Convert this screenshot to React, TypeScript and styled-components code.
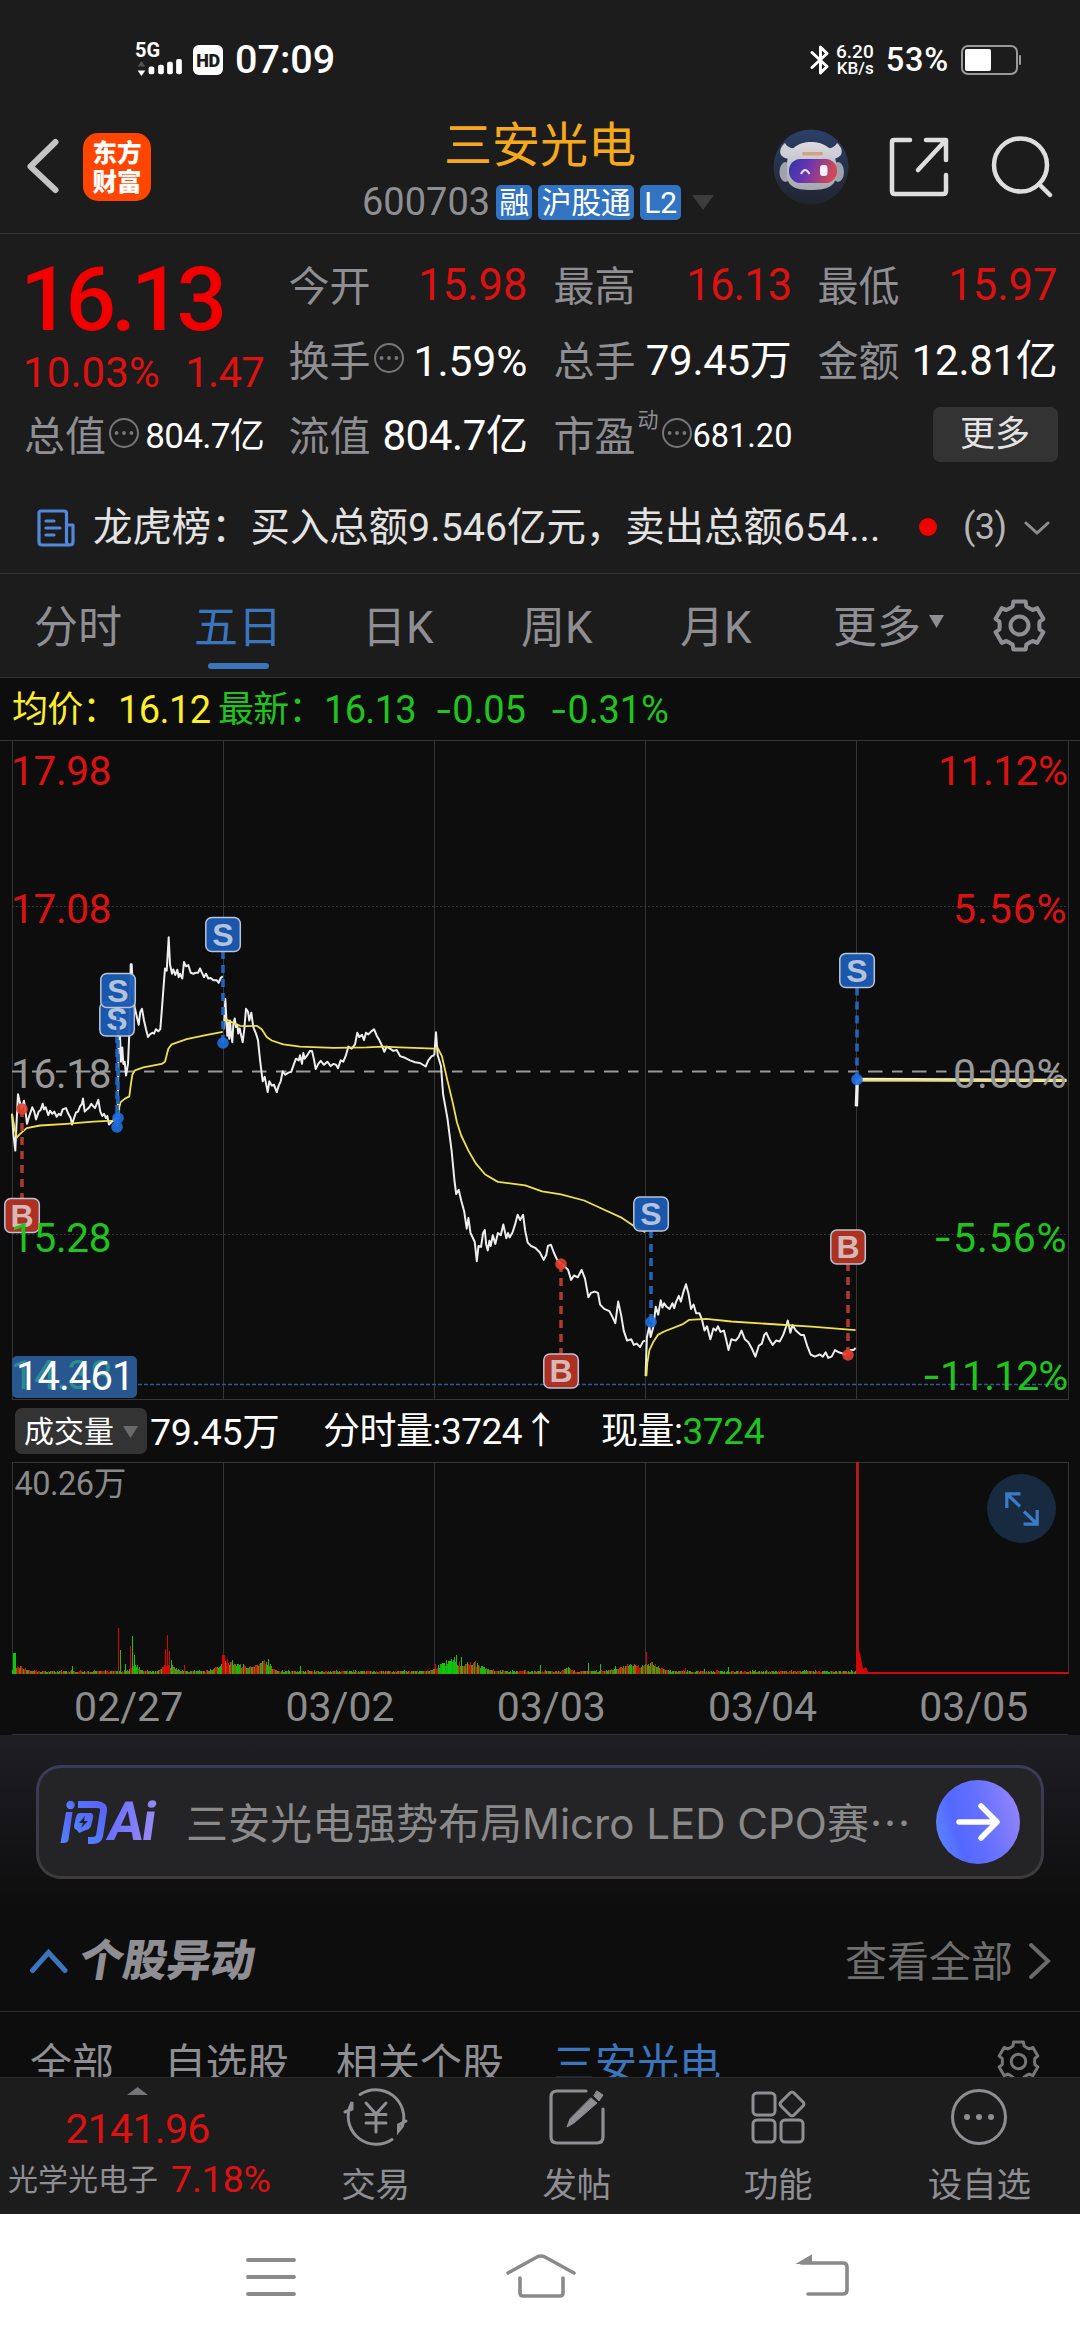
import React from "react";
import styled, { createGlobalStyle } from "styled-components";

const GlobalStyle = createGlobalStyle`
  * { box-sizing: border-box; }
  body { margin: 0; background: #0d0d0d; }
`;

const RED = "#dc1212";
const GREEN = "#1fc41f";
const BLUE = "#3a75bd";
const GREY = "#8e8e93";

const Screen = styled.div`
  width: 1080px;
  height: 2340px;
  overflow: hidden;
  display: flex;
  flex-direction: column;
  background: #0d0d0d;
  color: #fff;
  font-family: Roboto, "Noto Sans CJK SC", sans-serif;
  white-space: nowrap;
`;

const Text = styled.span<{ $size: number; $color?: string; $ls?: number; $weight?: number; $w?: number; $ml?: number }>`
  flex: none;
  font-size: ${(p) => p.$size}px;
  line-height: 1.2;
  font-weight: ${(p) => p.$weight ?? 400};
  color: ${(p) => p.$color ?? "#fff"};
  letter-spacing: ${(p) => p.$ls ?? 0}px;
  margin-left: ${(p) => p.$ml ?? 0}px;
  ${(p) => (p.$w ? `width: ${p.$w}px;` : "")}
`;
const Minus = styled.span`
  font-family: Inter, sans-serif;
  line-height: 1;
`;

/* ---------- status bar ---------- */

const StatusBar = styled.div`
  height: 104px;
  padding: 16px 58px 0 136px;
  display: flex;
  align-items: center;
  background: #1c1c1c;
`;
const Signal = styled.div`
  width: 57px;
  height: 36px;
  display: flex;
  flex-direction: column;
`;
const SignalLabel = styled.span`
  font: 700 20px/17px Roboto, sans-serif;
  margin-left: -1px;
`;
const HdBadge = styled.span`
  width: 30px;
  height: 30px;
  margin-right: 12px;
  border-radius: 6px;
  background: #fff;
  color: #1c1c1c;
  font: 900 18px/31px Roboto, sans-serif;
  letter-spacing: -0.5px;
  text-align: center;
`;
const Speed = styled.div`
  width: 42px;
  margin: 0 8px 0 6px;
  display: flex;
  flex-direction: column;
  align-items: flex-end;
  font: 500 19px/17px Roboto, sans-serif;
  padding-right: 4px;
`;
const SpeedUnit = styled.span`
  font-size: 17px;
  line-height: 17px;
`;
const Spacer = styled.div`
  flex: 1;
`;

/* ---------- title bar ---------- */

const TitleBar = styled.header`
  height: 130px;
  padding: 0 27px 0 26px;
  display: flex;
  align-items: center;
  background: #1c1c1c;
  border-bottom: 1px solid #343434;
`;
const AppLogo = styled.div`
  width: 68px;
  height: 68px;
  margin: -4px 0 0 24px;
  border-radius: 15px;
  background: #ff4500;
  font: 900 24.5px/29px "Noto Sans CJK SC", sans-serif;
  text-align: center;
  padding-top: 4px;
  display: flex;
  flex-direction: column;
`;
const TitleBlock = styled.div`
  width: 360px;
  margin-left: 209px;
  margin-right: 1px;
  display: flex;
  flex-direction: column;
  align-items: center;
`;
const CodeRow = styled.div`
  width: 360px;
  height: 36px;
  margin-top: 10px;
  padding-left: 2px;
  display: flex;
  align-items: center;
  gap: 6px;
`;
const Tag = styled.span<{ $w: number }>`
  width: ${(p) => p.$w}px;
  height: 35px;
  border-radius: 5px;
  background: #3274c3;
  font-size: 30px;
  line-height: 35px;
  text-align: center;
  letter-spacing: -0.3px;
`;
const Actions = styled.div`
  margin: -4px 0 0 auto;
  display: flex;
  align-items: center;
`;

/* ---------- quote ---------- */

const Quote = styled.section`
  height: 237px;
  padding: 0 22px 0 24px;
  display: flex;
  background: #1c1c1c;
`;
const PriceColumn = styled.div`
  width: 240px;
  margin-right: 24.5px;
  display: flex;
  flex-direction: column;
`;
const BigPrice = styled.div`
  height: 102px;
  margin-left: -4px;
  padding-top: 15px;
  font-size: 89px;
  line-height: 102px;
  font-weight: 500;
  color: #f20000;
  letter-spacing: -5px;
`;
const ChangeRow = styled.div`
  height: 75px;
  display: flex;
  align-items: center;
  justify-content: space-between;
`;
const StatGrid = styled.div`
  padding-top: 15px;
  display: grid;
  grid-template-columns: 239px 238px 240px;
  grid-auto-rows: 75px;
  column-gap: 26px;
`;
const Stat = styled.div<{ $h?: number }>`
  height: ${(p) => p.$h ?? 75}px;
  display: flex;
  align-items: center;
  justify-content: space-between;
`;
const StatLabel = styled.span`
  display: flex;
  align-items: center;
  color: ${GREY};
  font-size: 41px;
  line-height: 50px;
`;
const Dynamic = styled.sup`
  font-size: 21px;
  line-height: 24px;
  align-self: flex-start;
  margin: -4px 0 0 2px;
`;
const MoreButton = styled.button`
  width: 125px;
  height: 55px;
  margin: -4px 0 0 auto;
  border: 0;
  border-radius: 7px;
  background: #333;
  color: #e4e4e4;
  font: 400 35px/54px Roboto, "Noto Sans CJK SC", sans-serif;
  padding: 0;
`;
const News = styled.section`
  height: 103px;
  padding: 14px 30px 2px 37px;
  display: flex;
  align-items: center;
  background: #1c1c1c;
  border-bottom: 1px solid #343434;
`;
const Dot = styled.i`
  width: 18px;
  height: 18px;
  margin: -2px 0 0 12px;
  border-radius: 50%;
  background: #f20000;
`;

/* ---------- period tabs ---------- */

const Tabs = styled.nav`
  height: 104px;
  padding-left: 34px;
  display: flex;
  align-items: stretch;
  background: #1c1c1c;
  border-bottom: 1px solid #343434;
`;
const Tab = styled.div<{ $w: number; $on?: boolean }>`
  width: ${(p) => p.$w}px;
  padding-top: 26px;
  font-size: 44px;
  line-height: 56px;
  color: ${(p) => (p.$on ? BLUE : GREY)};
`;
const TabLine = styled.i`
  display: block;
  width: 61px;
  height: 6px;
  margin: 7px 0 0 14px;
  border-radius: 3px;
  background: ${BLUE};
`;
const GearSlot = styled.div`
  padding-top: 25px;
`;

/* ---------- charts ---------- */

const Summary = styled.div`
  height: 62px;
  padding: 3px 0 0 12px;
  display: flex;
  align-items: center;
`;
const PricePlot = styled.div`
  height: 660px;
  svg { display: block; }
`;
const VolumeHead = styled.div`
  height: 62px;
  padding-left: 15px;
  display: flex;
  align-items: center;
`;
const VolumeValues = styled.div`
  display: flex;
  align-items: center;
  padding: 3px 0 0 3px;
`;
const Picker = styled.div`
  width: 132px;
  height: 46px;
  border-radius: 7px;
  background: #333;
  display: flex;
  align-items: center;
  gap: 9px;
  padding: 2px 0 0 9px;
`;
const VolumePlot = styled.div`
  position: relative;
  height: 213px;
  svg { display: block; }
`;
const Expand = styled.div`
  position: absolute;
  right: 24px;
  top: 12px;
  width: 69px;
  height: 69px;
  border-radius: 50%;
  background: #182a40;
  display: flex;
  align-items: center;
  justify-content: center;
`;
const Dates = styled.div`
  height: 60px;
  margin: 0 12px;
  padding-left: 11px;
  border-bottom: 1px solid #343434;
  display: grid;
  grid-template-columns: repeat(5, 211.3px);
  font-size: 41px;
  line-height: 64px;
  text-align: center;
  color: #8c8c8c;
`;

/* ---------- assistant ---------- */

const Assistant = styled.section`
  height: 175px;
  padding: 30px 36px 0;
  background: linear-gradient(#1f1e24, #0d0d0d);
`;
const AskBorder = styled.div`
  height: 114px;
  padding: 3px;
  border-radius: 25px;
  background: linear-gradient(#3a3a5a, #3e3a3a);
`;
const AskBox = styled.div`
  height: 108px;
  border-radius: 22px;
  background: #242426;
  display: flex;
  align-items: center;
  padding-left: 20px;
`;
const AskLogo = styled.div`
  width: 127px;
  display: flex;
  align-items: center;
`;
const AskAi = styled.span`
  display: inline-block;
  padding: 0 4px;
  margin-left: -4px;
  font: 700 54px/60px Roboto, sans-serif;
  background: linear-gradient(90deg, #626cff, #9b8cf6);
  background-clip: text;
  -webkit-background-clip: text;
  color: transparent;
  transform: skewX(-8deg);
  letter-spacing: -2px;
`;
const AskText = styled.span`
  padding-top: 3px;
  font: 400 42px/52px Inter, "Noto Sans CJK SC", sans-serif;
  color: #8a8a8a;
`;
const Send = styled.div`
  width: 84px;
  height: 84px;
  margin-left: auto;
  margin-right: 21px;
  border-radius: 50%;
  background: linear-gradient(75deg, #5a84ff 8%, #5468ff 28%, #6470ff 55%, #9585fa 95%);
  display: flex;
  align-items: center;
  justify-content: center;
`;

/* ---------- movements ---------- */

const SectionHead = styled.div`
  height: 102px;
  padding: 0 29px 0 29px;
  display: flex;
  align-items: center;
  border-bottom: 1px solid #2a2a2a;
`;
const SectionTitle = styled.h2`
  margin: 0 auto 0 12px;
  font: 900 44px/60px "Noto Sans CJK SC", sans-serif;
  color: ${GREY};
  transform: skewX(-9deg);
  letter-spacing: -0.3px;
  padding-bottom: 8px;
`;
const ViewAll = styled.span`
  padding-top: 4px;
  font-size: 42px;
  line-height: 50px;
  color: #6e6e6e;
`;
const Filters = styled.div`
  height: 66px;
  padding: 28px 40px 0 30px;
  overflow: hidden;
  display: flex;
  align-items: flex-start;
  border-bottom: 1px solid #2a2a2a;
`;

/* ---------- bottom bar ---------- */

const BottomBar = styled.footer`
  height: 136px;
  display: flex;
  background: #1c1c1c;
`;
const IndexBox = styled.div`
  width: 275px;
  display: flex;
  flex-direction: column;
  align-items: center;
  padding-top: 9px;
  gap: 10px;
`;
const IndexRow = styled.div`
  width: 275px;
  margin-top: -7px;
  padding: 0 4px 0 8px;
  display: flex;
  align-items: center;
  justify-content: space-between;
`;
const Action = styled.div`
  width: 201.5px;
  padding-top: 7px;
  display: flex;
  flex-direction: column;
  align-items: center;
  gap: 16px;
`;
const SystemNav = styled.div`
  height: 126px;
  background: #fff;
  display: flex;
  padding-left: 241px;
`;
const NavSlot = styled.div<{ $w: number }>`
  width: ${(p) => p.$w}px;
  padding-top: 36px;
`;

/* ---------- icons ---------- */

const Icon = styled.svg<{ $ml?: string; $mt?: number }>`
  flex: none;
  margin-left: ${(p) => p.$ml ?? "0"};
  margin-top: ${(p) => p.$mt ?? 0}px;
`;

const More3 = () => (
  <Icon $ml="2px" $mt={-8} width="32" height="32" viewBox="0 0 32 32" fill="#77777a">
    <circle cx="16" cy="16" r="14" fill="none" stroke="#77777a" strokeWidth="2" />
    <circle cx="8.6" cy="16" r="1.9" /><circle cx="16" cy="16" r="1.9" /><circle cx="23.4" cy="16" r="1.9" />
  </Icon>
);

const Gear = ({ size, color, sw }: { size: number; color: string; sw: number }) => {
  const pts: string[] = [];
  for (let i = 0; i < 6; i++) {
    const a = (i * Math.PI) / 3;
    const add = (r: number, d: number) =>
      pts.push(`${(26 + r * Math.sin(a + d)).toFixed(1)},${(26 - r * Math.cos(a + d)).toFixed(1)}`);
    add(19.4, -0.52);
    add(20, -0.34);
    add(24.3, -0.25);
    add(24.3, 0.25);
    add(20, 0.34);
  }
  return (
    <svg width={size} height={size} viewBox="0 0 52 52" fill="none" stroke={color} strokeWidth={sw} strokeLinejoin="round">
      <polygon points={pts.join(" ")} />
      <circle cx="26" cy="26" r="8.8" />
    </svg>
  );
};

const Robot = () => (
  <svg width="76" height="76" viewBox="0 0 76 76">
    <defs>
      <linearGradient id="sky" x1="0" y1="0" x2="0" y2="1">
        <stop offset="0" stopColor="#2c3f68" /><stop offset="1" stopColor="#20242e" />
      </linearGradient>
      <linearGradient id="visor" x1="0" y1="0" x2="1" y2="0.2">
        <stop offset="0" stopColor="#2f36a8" /><stop offset="0.45" stopColor="#6a35b0" /><stop offset="1" stopColor="#cf4a55" />
      </linearGradient>
      <linearGradient id="shell" x1="0" y1="0" x2="0" y2="1">
        <stop offset="0" stopColor="#dcdce0" /><stop offset="1" stopColor="#a4a6b0" />
      </linearGradient>
    </defs>
    <circle cx="38" cy="38" r="37.5" fill="url(#sky)" />
    <path d="M12 14c-6 5-8 14 4 16l8-11c-6 1-10-1-12-5zM64 14c6 5 8 14-4 16l-8-11c6 1 10-1 12-5z" fill="#cdced6" />
    <ellipse cx="12.5" cy="43" rx="6" ry="10" fill="#a0a2ae" /><ellipse cx="65" cy="43" rx="6" ry="10" fill="#a0a2ae" />
    <path d="M14 34c1-14 11-21 24-21s24 7 25 21v13c-1 10-8 14-25 14s-23-4-24-14z" fill="url(#shell)" />
    <rect x="16" y="30" width="48" height="24" rx="11.5" fill="url(#visor)" />
    <rect x="29" y="23" width="21" height="3.500" rx="1.700" fill="#d6a27d" />
    <path d="M28 45q4-8 8.500 0" stroke="#e8e8ff" strokeWidth="2" fill="none" />
    <rect x="47" y="36" width="7.500" height="11" rx="3" fill="#f4f0ff" />
  </svg>
);

/* ---------- chart data ---------- */

type Frame = { x0: number; kx: number };
const FIRST: Frame = { x0: 0, kx: 1 / 3 };
const LAST: Frame = { x0: 420, kx: 1 / 2.376 };

const line = (f: Frame, raw: string) =>
  raw
    .split(" ")
    .map((p) => {
      const [x, y] = p.split(",").map(Number);
      return `${(f.x0 + x * f.kx).toFixed(1)},${(y / 2.306 - 10).toFixed(1)}`;
    })
    .join(" ");

const PRICE = [
  line(FIRST, "36,885 40,930 46,970 50,900 54,840 60,860 65,873 72,855 78,890 81,908 88,890 97,870 103,880 108,898 116,880 122,876 128,862 132,875 137,870 145,888 150,878 157,885 163,880 170,892 176,885 182,888 188,875 198,872 205,885 212,895 216,910 222,895 228,882 234,880 240,868 246,862 249,850 254,880 261,875 268,870 274,862 280,868 285,872 295,853 301,880 307,890 312,885 318,895 322,890 327,910 333,905 340,900 348,905 353,895 356,690 360,705 363,765 367,732 370,770 374,765 378,797 384,770 388,700 392,540 395,540 398,590 404,640 410,660 416,680 421,650 426,643 432,670 438,690 444,708 450,702 457,698 462,700 468,690 475,695 481,690 485,650 490,600 495,550 500,555 506,478 510,540 516,562 520,552 526,565 532,553 536,570 540,562 547,573 552,535 558,545 565,542 572,560 580,562 587,560 594,560 600,550 606,560 612,570 618,562 625,573 632,572 640,577 650,577 656,583 662,572 668,568"),
  line(FIRST, "672,690 676,620 680,680 682,705 684,675 688,712 690,670 693,700 697,720 700,680 704,665 708,685 712,680 715,700 719,688 722,700 728,720 733,690 738,643 744,650 748,670 754,652 760,685 768,700 774,715 780,760 788,810 794,800 798,815 803,835 808,810 815,820 822,818 830,835 836,820 842,810 848,787 856,795 865,790 874,788 882,770 888,758 896,762 900,750 906,770 910,745 914,758 922,750 930,740 936,740 942,760 947,782 955,770 962,763 972,772 982,765 992,775 1000,770 1008,772 1014,780 1022,762 1030,765 1038,750 1045,730 1055,735 1065,725 1072,698 1078,708 1086,703 1092,715 1098,698 1105,702 1114,695 1122,690 1130,705 1138,715 1146,728 1153,742 1160,730 1170,735 1180,740 1190,738 1200,752 1215,756 1230,762 1245,766 1260,768 1277,776 1285,762 1295,752 1303,750"),
  line(LAST, "34,750 38,697 42,750 50,775 55,840 60,868 65,895 75,970 82,1040 86,1070 92,1060 98,1085 105,1110 111,1150 115,1125 120,1160 130,1180 135,1225 139,1190 145,1192 150,1160 154,1153 157,1185 161,1200 165,1178 168,1190 173,1165 179,1185 185,1160 192,1165 198,1140 205,1172 209,1160 213,1170 220,1158 226,1140 232,1118 238,1130 245,1118 250,1155 256,1182 264,1190 275,1195 285,1205 294,1222 300,1210 304,1190 311,1187 318,1205 325,1220 335,1232 345,1238 352,1245 359,1268 366,1258 375,1262 384,1245 392,1265 400,1308 406,1298 415,1295 423,1298 428,1325 438,1335 450,1340 458,1355 464,1368 471,1318 478,1350 484,1385 492,1408 502,1405 508,1418 515,1415 523,1423 530,1410 535,1408"),
  line(LAST, "536,1490 539,1400 545,1375 548,1400 554,1378 560,1330 566,1348 572,1315 576,1332 580,1322 586,1330 593,1335 600,1322 604,1333 608,1320 615,1305 620,1318 626,1295 632,1278 638,1300 644,1335 650,1325 656,1345 664,1345 670,1360 676,1385 682,1375 690,1405 697,1380 703,1385 708,1375 714,1388 722,1385 728,1408 733,1430 740,1405 750,1408 757,1400 764,1385 772,1405 780,1412 788,1425 797,1445 805,1420 812,1415 818,1395 823,1390 830,1405 838,1418 846,1408 855,1410 863,1395 870,1375 874,1362 880,1390 885,1372 893,1385 905,1395 912,1395 920,1420 928,1440 938,1445 950,1440 957,1445 964,1435 970,1448 978,1445 986,1430 995,1435 1005,1438 1015,1440 1022,1430 1030,1430 1035,1425"),
  line(LAST, "1037,868 1039,806 1536,808"),
];
const AVERAGE = [
  line(FIRST, "36,885 44,920 50,940 58,933 80,918 120,912 200,908 280,903 340,901 357,890 358,870 362,858 375,850 388,845 392,820 397,795 405,785 430,778 485,770 495,765 505,735 515,725 560,713 610,705 668,696"),
  line(FIRST, "672,665 690,672 720,682 740,683 770,682 785,690 800,708 815,716 850,725 900,730 1000,733 1100,732 1150,730 1200,732 1303,735"),
  line(LAST, "34,735 42,733 52,752 65,808 78,860 88,905 98,935 115,970 133,1000 155,1025 185,1042 250,1050 290,1064 335,1071 390,1085 430,1103 480,1125 510,1145 535,1158"),
  line(LAST, "538,1490 540,1460 545,1430 555,1410 565,1395 580,1387 625,1370 640,1360 680,1358 740,1364 850,1371 930,1376 1035,1384"),
  line(LAST, "1039,808 1536,808"),
];

const COLUMNS = [12.5, 223.5, 434.5, 645.5, 856.5, 1068.5];

const MARKS = [
  { k: "B", x: 22, box: 475.5, dot: 369 },
  { k: "S", x: 117, box: 279, dot: 387 },
  { k: "S", x: 118, box: 250.5, dot: 378 },
  { k: "S", x: 223, box: 194.5, dot: 303 },
  { k: "B", x: 561, box: 631, dot: 524 },
  { k: "S", x: 651, box: 474, dot: 582 },
  { k: "B", x: 848, box: 507, dot: 615 },
  { k: "S", x: 857, box: 230.5, dot: 339.5 },
];

const LEFT_LABELS: [string, number, string][] = [
  ["17.98", 30, RED], ["17.08", 168, RED], ["16.18", 333, "#999"], ["15.28", 497, GREEN],
];
const RIGHT_LABELS: [string, number, string, number][] = [
  ["11.12%", 30, RED, -0.6], ["5.56%", 168, RED, 0.9], ["0.00%", 333, "#999", 0.9],
  ["-5.56%", 497, GREEN, 0.9], ["-11.12%", 635, GREEN, -0.9],
];

const PriceChart = () => (
  <svg width="1080" height="660" viewBox="0 0 1080 660" fontFamily="Roboto, sans-serif">
    <g stroke="#363636" fill="none">
      <path d="M0 0.5H1080M12 659.5H1069" />
      {COLUMNS.map((x) => <path key={x} d={`M${x} 1V660`} />)}
      <path d="M12 166.5H1068M12 494.5H1068" strokeDasharray="2 2" />
    </g>
    <path d="M12 331.5H1068" stroke="#9a9a9a" strokeWidth="2" strokeDasharray="10.500 9.500 14.500 9.500" />
    <path d="M12 644.500H1068" stroke="#2b5a8c" strokeWidth="1.500" strokeDasharray="4 2" />
    <g fill="none" stroke="#eee" strokeLinejoin="round">
      {PRICE.map((p, i) => <polyline key={i} points={p} strokeWidth={i === 4 ? 3.4 : 2} />)}
    </g>
    <g fill="none" stroke="#efe24a" strokeWidth="1.800" strokeLinejoin="round">
      {AVERAGE.map((p, i) => <polyline key={i} points={p} />)}
    </g>
    {MARKS.map((m, i) => {
      const c = m.k === "S" ? "#2064c0" : "#b03a2c";
      const s = m.box < m.dot ? 17.5 : -17.5;
      return (
        <g key={i}>
          <path d={`M${m.x} ${m.dot}V${m.box + s}`} stroke={c} strokeWidth="3.500" strokeDasharray="8 6" />
          <circle cx={m.x} cy={m.dot} r="5.800" fill={m.k === "S" ? "#1f6fe0" : "#e2402f"} fillOpacity="0.9" />
          <rect x={m.x - 17.2} y={m.box - 17} width="34.500" height="34" rx="6" fill={m.k === "S" ? "#1b5bb5" : "#b53425"} fillOpacity="0.95" stroke="#b9c4d6" strokeWidth="1.500" />
          <text x={m.x} y={m.box + 11} fontFamily="Liberation Sans, sans-serif" fontWeight="700" fontSize="32" textAnchor="middle" fill={m.k === "S" ? "#b4c3dc" : "#d6b9b6"}>{m.k}</text>
        </g>
      );
    })}
    {LEFT_LABELS.map(([t, y, c]) => <text key={t} x="11" y={y + 14.5} fontSize="40.500" letterSpacing="-0.300" fill={c}>{t}</text>)}
    {RIGHT_LABELS.map(([t, y, c, ls]) => (
      <text key={t} x="1067.500" y={y + 14.5} fontSize="41" letterSpacing={ls} textAnchor="end" fill={c}>
        {t[0] === "-" ? <><tspan fontFamily="Inter, sans-serif">-</tspan>{t.slice(1)}</> : t}
      </text>
    ))}
    <rect x="12" y="616" width="125" height="42" rx="5" fill="#28568f" />
    <text x="11" y="649" fontSize="40.500" fill="#2a8d8d">14.38</text>
    <text x="16" y="650" fontSize="40" fill="#fff" letterSpacing="-0.900">14.461</text>
  </svg>
);

type Peak = [number, number, string, number];
const R = "#e00000";
const G = "#0ac80a";
const PEAKS: Peak[] = [
  [14, 21, G, 2], [17, 8, R, 1], [118, 46, R, 1], [120, 24, G, 1], [130, 28, R, 1], [132, 38, G, 1], [134, 19, G, 1],
  [165, 25, R, 1], [167, 39, R, 1], [169, 23, R, 1], [171, 14, G, 1], [72, 8, G, 1], [125, 10, G, 1], [184, 9, R, 1],
  [223, 19, R, 2], [227, 15, R, 1], [232, 14, G, 1], [243, 10, G, 1], [262, 13, G, 1], [268, 15, G, 1], [300, 8, G, 1],
  [435, 10, R, 1], [443, 11, G, 3], [449, 13, G, 3], [454, 17, G, 1], [456, 19, G, 1], [459, 13, R, 1], [461, 17, G, 1],
  [467, 12, G, 1], [475, 13, R, 1], [540, 9, G, 1], [568, 7, G, 1], [588, 11, G, 1], [600, 10, G, 1], [615, 8, G, 1],
  [646, 22, R, 1], [685, 6, R, 1], [704, 5, G, 1], [728, 7, G, 1], [804, 4, G, 1],
];
const HUMPS: [number, number, number][] = [
  [20, 5, 8], [135, 6, 6], [168, 8, 8], [226, 10, 12], [245, 6, 14], [265, 11, 8], [448, 12, 11], [472, 9, 16],
  [568, 3, 5], [630, 7, 16], [652, 8, 10],
];

const VolumeChart = () => {
  const bars: React.ReactElement[] = [];
  let seed = 7;
  const rnd = () => {
    seed = (seed * 16807) % 2147483647;
    return seed / 2147483647;
  };
  for (let x = 12; x < 857; x += 1) {
    const hump = HUMPS.reduce((s, [c, h, w]) => s + h * Math.exp(-(((x - c) / w) ** 2)), 0);
    const h = 2 + rnd() * 1.6 + hump * (0.5 + rnd() * 0.5);
    const near = x > 438 && x < 456;
    const r = rnd();
    bars.push(<rect key={x} x={x} y={212 - h} width="1" height={h} fill={near || r < 0.35 ? "#19b40c" : r < 0.65 ? "#8a6a0c" : "#c01a08"} />);
  }
  return (
    <svg width="1080" height="213" viewBox="0 0 1080 213">
      <g stroke="#363636" fill="none">
        <path d="M12 0.5H1069M12 211.5H1069" />
        {COLUMNS.map((x) => <path key={x} d={`M${x} 0V212`} />)}
      </g>
      <g shapeRendering="crispEdges">
        {bars}
        {PEAKS.map(([x, h, c, w], i) => <rect key={i} x={x - w / 2} y={212 - h} width={w + 0.6} height={h} fill={c} />)}
      </g>
      <path d="M857.500 0V212" stroke="#c41818" strokeWidth="2.600" />
      <path d="M856 212V188H859L861 196L863 207L866 205L868 210H1069V212Z" fill="#d00808" />
      <text x="14.500" y="32.500" fontFamily="Roboto, 'Noto Sans CJK SC', sans-serif" fontSize="32.500" letterSpacing="-0.500" fill="#8a8a8a">40.26万</text>
    </svg>
  );
};

/* ---------- page ---------- */

export default function App() {
  return (
    <Screen>
      <GlobalStyle />
      <StatusBar>
        <Signal>
          <SignalLabel>5G</SignalLabel>
          <svg width="48" height="20" viewBox="0 0 48 20" fill="#fff">
            <path d="M0.500 8L4.500 2L8.500 8Z" fill="#555" /><path d="M0.500 12L4.500 18L8.500 12Z" />
            <rect x="12" y="8" width="6" height="8" rx="2" /><rect x="22" y="6" width="6" height="10" rx="2" />
            <rect x="31.500" y="3" width="6" height="13" rx="2" /><rect x="41" y="0" width="6" height="16" rx="2" />
          </svg>
        </Signal>
        <HdBadge>HD</HdBadge>
        <Text $size={39.5} $weight={500} $ls={0}>07:09</Text>
        <Spacer />
        <svg width="20" height="30" viewBox="0 0 20 30" fill="none" stroke="#fff" strokeWidth="3" strokeLinejoin="round" strokeLinecap="round">
          <path d="M2 7.500L17 21.500L10.500 28V2L17 8.500L2 22.500" />
        </svg>
        <Speed>6.20<SpeedUnit>KB/s</SpeedUnit></Speed>
        <Text $size={32.5} $weight={500} $ls={0.8}>53%</Text>
        <Icon $ml="12px" width="61" height="30" viewBox="0 0 61 30">
          <rect x="1" y="1" width="55" height="28" rx="6" fill="none" stroke="#9a9a9a" strokeWidth="2" />
          <rect x="4" y="4" width="26" height="22" rx="2" fill="#fff" />
          <rect x="58" y="10" width="2" height="10" rx="1" fill="#9a9a9a" />
        </Icon>
      </StatusBar>

      <TitleBar>
        <Icon $mt={-6} width="33" height="56" viewBox="0 0 33 56" fill="none" stroke="#c4c4c4" strokeWidth="6" strokeLinecap="round" strokeLinejoin="round">
          <path d="M29.500 4L4.500 28.500L29.500 52" />
        </Icon>
        <AppLogo><span>东方</span><span>财富</span></AppLogo>
        <TitleBlock>
          <Text $size={48} $color="#f7a91c">三安光电</Text>
          <CodeRow>
            <Text $size={38} $color={GREY} $ls={0} $w={128}>600703</Text>
            <Tag $w={36}>融</Tag>
            <Tag $w={96}>沪股通</Tag>
            <Tag $w={41}>L2</Tag>
            <Icon $ml="5px" width="22" height="15" viewBox="0 0 22 15"><path d="M0 0H22L11 15Z" fill="#3c3c3c" /></Icon>
          </CodeRow>
        </TitleBlock>
        <Actions>
          <Robot />
          <Icon $ml="40px" width="60" height="60" viewBox="0 0 60 60" fill="none" stroke="#dedede" strokeWidth="4.500" strokeLinecap="round" strokeLinejoin="round">
            <path d="M21 3H5Q3 3 3 5V54Q3 57 6 57H54Q57 57 57 54V38M37 3H57V23M56 4L29 33" />
          </Icon>
          <Icon $ml="42px" width="62" height="62" viewBox="0 0 62 62" fill="none" stroke="#dedede" strokeWidth="4.500" strokeLinecap="round">
            <circle cx="29.500" cy="29" r="26.500" /><path d="M48 48L59 59" />
          </Icon>
        </Actions>
      </TitleBar>

      <Quote>
        <PriceColumn>
          <BigPrice>16.13</BigPrice>
          <ChangeRow>
            <Text $size={42} $color={RED} $ls={0.1} $ml={-1}>10.03%</Text>
            <Text $size={42} $color={RED} $ls={-0.8}>1.47</Text>
          </ChangeRow>
          <Stat $h={52}>
            <StatLabel>总值<More3 /></StatLabel>
            <Text $size={35} $ls={-0.7}>804.7亿</Text>
          </Stat>
        </PriceColumn>
        <StatGrid>
          <Stat><StatLabel>今开</StatLabel><Text $size={43.5} $color={RED}>15.98</Text></Stat>
          <Stat><StatLabel>最高</StatLabel><Text $size={43.5} $color={RED} $ls={-0.8}>16.13</Text></Stat>
          <Stat><StatLabel>最低</StatLabel><Text $size={43.5} $color={RED}>15.97</Text></Stat>
          <Stat><StatLabel>换手<More3 /></StatLabel><Text $size={42.5}>1.59%</Text></Stat>
          <Stat><StatLabel>总手</StatLabel><Text $size={42} $ls={-0.3}>79.45万</Text></Stat>
          <Stat><StatLabel>金额</StatLabel><Text $size={42} $ls={-0.3}>12.81亿</Text></Stat>
          <Stat><StatLabel>流值</StatLabel><Text $size={42} $ls={-0.4}>804.7亿</Text></Stat>
          <Stat><StatLabel>市盈<Dynamic>动</Dynamic><More3 /></StatLabel><Text $size={32.5}>681.20</Text></Stat>
          <Stat><MoreButton>更多</MoreButton></Stat>
        </StatGrid>
      </Quote>

      <News>
        <svg width="38" height="38" viewBox="0 0 38 38" fill="none" stroke="#5288dc" strokeWidth="3.200" strokeLinejoin="round" strokeLinecap="round">
          <path d="M30 36H5Q2 36 2 33V4Q2 2 4 2H27Q29.500 2 29.500 4V33Q30 36 32.500 36Q36 36 36 33V16H30M9 12H17M9 19H23M9 26H17" />
        </svg>
        <Text $size={39.4} $color="#e3e3e3" $w={814} $ml={18}>龙虎榜：买入总额9.546亿元，卖出总额654...</Text>
        <Dot />
        <Text $size={36} $color="#b6b6b6" $ls={-0.5} $ml={26}>(3)</Text>
        <Icon $ml="auto" width="26" height="16" viewBox="0 0 26 16" fill="none" stroke="#8e8e8e" strokeWidth="3" strokeLinecap="round">
          <path d="M2 3L13 13L24 3" />
        </Icon>
      </News>

      <Tabs>
        <Tab $w={160}>分时</Tab>
        <Tab $w={168} $on>五日<TabLine /></Tab>
        <Tab $w={159}>日K</Tab>
        <Tab $w={159}>周K</Tab>
        <Tab $w={153}>月K</Tab>
        <Tab $w={160}>更多<Icon $ml="8px" width="15" height="28" viewBox="0 0 15 28"><path d="M0 0H15L7.500 13Z" fill={GREY} /></Icon></Tab>
        <GearSlot><Gear size={53} color={GREY} sw={4} /></GearSlot>
      </Tabs>

      <Summary>
        <Text $size={36} $color="#fdee2c" $w={106} $ls={-0.8}>均价：</Text>
        <Text $size={38} $color="#fdee2c" $w={100} $ls={-0.6}>16.12</Text>
        <Text $size={36} $color={GREEN} $w={106} $ls={-0.8}>最新：</Text>
        <Text $size={38} $color={GREEN} $w={111} $ls={-0.7}>16.13</Text>
        <Text $size={38} $color={GREEN} $w={115} $ls={-0.2}><Minus>-</Minus>0.05</Text>
        <Text $size={38} $color={GREEN} $ls={-0.1}><Minus>-</Minus>0.31%</Text>
      </Summary>

      <PricePlot><PriceChart /></PricePlot>

      <VolumeHead>
        <Picker>
          <Text $size={30}>成交量</Text>
          <svg width="15" height="12" viewBox="0 0 15 12"><path d="M0 0H15L7.500 12Z" fill="#6a6a6a" /></svg>
        </Picker>
        <VolumeValues>
          <Text $size={37.5} $w={173} $ls={-0.4}>79.45万</Text>
          <Text $size={37} $w={278} $ls={-0.5}>分时量:3724↑</Text>
          <Text $size={37} $ls={-0.5}>现量:</Text>
          <Text $size={37} $color={GREEN} $ls={-0.4}>3724</Text>
        </VolumeValues>
      </VolumeHead>

      <VolumePlot>
        <VolumeChart />
        <Expand>
          <svg width="34" height="34" viewBox="0 0 34 34" fill="none" stroke="#3a7cc8" strokeWidth="3.200">
            <path d="M15.500 1.800H1.800V16M2 2L15 14.500M18.500 32.200H32.200V18M32 32L19 19.500" />
          </svg>
        </Expand>
      </VolumePlot>
      <Dates>
        <span>02/27</span><span>03/02</span><span>03/03</span><span>03/04</span><span>03/05</span>
      </Dates>

      <Assistant>
        <AskBorder>
          <AskBox>
            <AskLogo>
              <svg width="49" height="46" viewBox="0 0 49 46" fill="none">
                <defs>
                  <linearGradient id="ask" x1="0" y1="1" x2="1" y2="0">
                    <stop offset="0" stopColor="#4f86ff" /><stop offset="1" stopColor="#5b62f8" />
                  </linearGradient>
                </defs>
                <circle cx="11.500" cy="6" r="4.200" fill="url(#ask)" />
                <path d="M7 13H13.500L9.500 41Q8.500 44 5 44H1.500Z" fill="url(#ask)" />
                <path d="M19 5.500H38Q45.500 6 44.500 12L40.500 37Q39.500 41.500 34 41.500H29" stroke="url(#ask)" strokeWidth="7" />
                <path d="M21 14H32Q35 15 34 19L32 27Q31 30 27 31L20 34L18 31Q15 30 15 27L17 18Q18 14 21 14Z" fill="url(#ask)" />
                <path d="M26 17L20 24H24L22 29L29 22H25Z" fill="#242426" />
              </svg>
              <AskAi>Ai</AskAi>
            </AskLogo>
            <AskText>三安光电强势布局Micro LED CPO赛⋯</AskText>
            <Send>
              <svg width="44" height="38" viewBox="0 0 44 38" fill="none" stroke="#fff" strokeWidth="5.500" strokeLinecap="round" strokeLinejoin="round">
                <path d="M3 19H40M25 3L41 19L25 35" />
              </svg>
            </Send>
          </AskBox>
        </AskBorder>
      </Assistant>

      <SectionHead>
        <svg width="39" height="26" viewBox="0 0 39 26" fill="none" stroke="#3a75bd" strokeWidth="5" strokeLinecap="round">
          <path d="M3.500 22.500L19.500 4.500L36 22.500" />
        </svg>
        <SectionTitle>个股异动</SectionTitle>
        <ViewAll>查看全部</ViewAll>
        <Icon $ml="15px" width="23" height="38" viewBox="0 0 23 38" fill="none" stroke="#6a6a6a" strokeWidth="4" strokeLinecap="round">
          <path d="M3 3L20 19L3 35" />
        </Icon>
      </SectionHead>
      <Filters>
        <Text $size={42} $color={GREY} $w={134}>全部</Text>
        <Text $size={42} $color={GREY} $w={172} $ls={-0.5}>自选股</Text>
        <Text $size={42} $color={GREY} $w={217}>相关个股</Text>
        <Text $size={42} $color={BLUE}>三安光电</Text>
        <Spacer />
        <Gear size={43} color="#77777a" sw={3.6} />
      </Filters>

      <BottomBar>
        <IndexBox>
          <svg width="21" height="8" viewBox="0 0 21 8"><path d="M0 8L10.500 0L21 8Z" fill="#77757a" /></svg>
          <Text $size={41} $color={RED} $ls={-0.7}>2141.96</Text>
          <IndexRow>
            <Text $size={30} $color={GREY}>光学光电子</Text>
            <Text $size={37.5} $color={RED} $ls={-0.1}>7.18%</Text>
          </IndexRow>
        </IndexBox>
        <Action>
          <svg width="66" height="64" viewBox="0 0 66 64" fill="none" stroke={GREY} strokeWidth="3" strokeLinecap="round">
            <path d="M17 9.500A28 28 0 0 1 59.500 41L55.500 46V40L63 36M49 54.500A28 28 0 0 1 6.500 23L9 17V24L2 27" />
            <path d="M23 18L33 29L43 18M33 29V47M23 29.500H43M23 38H43" />
          </svg>
          <Text $size={34.5} $color={GREY}>交易</Text>
        </Action>
        <Action>
          <svg width="58" height="64" viewBox="0 0 58 64" fill="none" stroke={GREY} strokeWidth="3.200" strokeLinecap="round">
            <path d="M38 6H9Q3 6 3 12V52Q3 58 9 58H49Q55 58 55 52V24" />
            <path d="M43 13L49 18L26 38L19 42L22 34Z" fill={GREY} strokeWidth="1" /><path d="M49 6L55 10L51 16L46 11Z" fill={GREY} strokeWidth="1" />
          </svg>
          <Text $size={34.5} $color={GREY}>发帖</Text>
        </Action>
        <Action>
          <svg width="56" height="64" viewBox="0 0 56 64" fill="none" stroke={GREY} strokeWidth="3">
            <rect x="3" y="8" width="22" height="22" rx="4" /><rect x="3" y="35" width="22" height="22" rx="4" /><rect x="31" y="35" width="22" height="22" rx="4" />
            <path d="M40 8Q42 6 44 8L53 17Q55 19 53 21L44 30Q42 32 40 30L31 21Q29 19 31 17Z" />
          </svg>
          <Text $size={34.5} $color={GREY}>功能</Text>
        </Action>
        <Action>
          <svg width="60" height="64" viewBox="0 0 60 64" fill="none" stroke={GREY} strokeWidth="3">
            <circle cx="30" cy="32" r="26.500" />
            <g fill={GREY} stroke="none"><circle cx="18" cy="32" r="3" /><circle cx="30" cy="32" r="3" /><circle cx="42" cy="32" r="3" /></g>
          </svg>
          <Text $size={34.5} $color={GREY}>设自选</Text>
        </Action>
      </BottomBar>

      <SystemNav>
        <NavSlot $w={262}>
          <svg width="60" height="54" viewBox="0 0 60 54" stroke="#8a8a8a" strokeWidth="3.800" strokeLinecap="round"><path d="M7 10H53M7 27H53M7 44H53" /></svg>
        </NavSlot>
        <NavSlot $w={290}>
          <svg width="76" height="54" viewBox="0 0 76 54" fill="none" stroke="#8a8a8a" strokeWidth="3.600" strokeLinecap="round">
            <path d="M5 23L34 7Q38 5 42 7L71 23M17 28V43Q17 46 20 46H57Q60 46 60 43V28" />
          </svg>
        </NavSlot>
        <NavSlot $w={70}>
          <svg width="60" height="54" viewBox="0 0 60 54" fill="none" stroke="#8a8a8a" strokeWidth="3.600" strokeLinecap="round">
            <path d="M8 13H50Q54 13 54 17V40Q54 44 50 44H15" /><path d="M6 13L18 6V13Z" fill="#8a8a8a" strokeWidth="2" />
          </svg>
        </NavSlot>
      </SystemNav>
    </Screen>
  );
}
